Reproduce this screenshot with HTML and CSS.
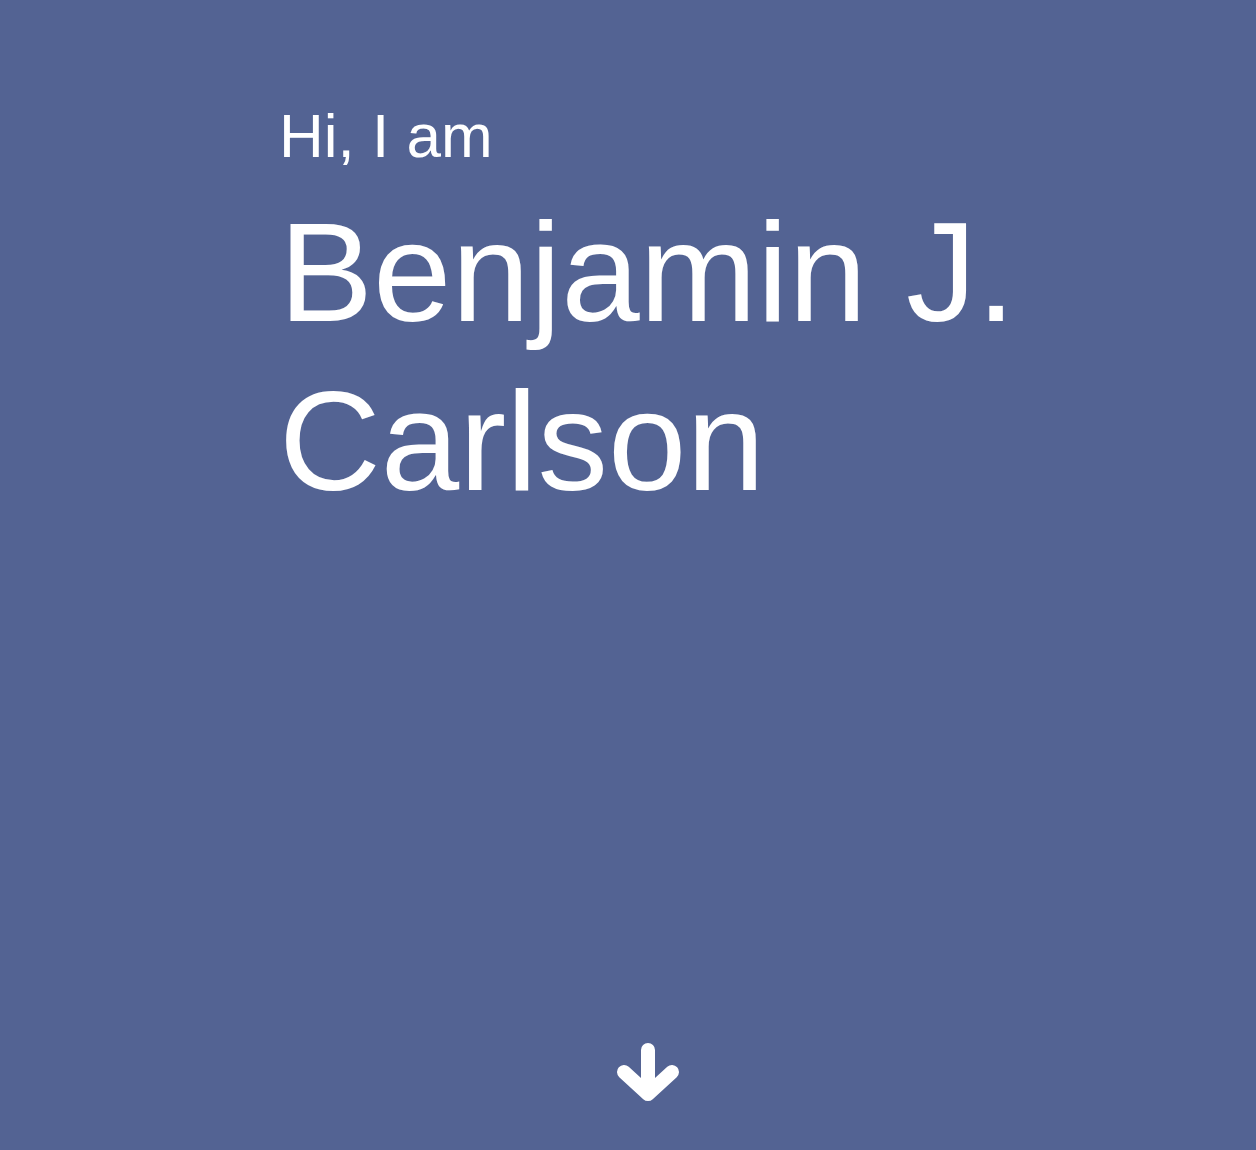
FILE: index.html
```html
<!DOCTYPE html>
<html lang="en">
<head>
<meta charset="utf-8">
<title>Benjamin J. Carlson</title>
<link rel="stylesheet" href="styles.css">
</head>
<body>
<section class="hero">
  <div class="intro">
    <p class="greeting">Hi, I am</p>
    <h1 class="name">Benjamin J.<br>Carlson</h1>
  </div>
  <a class="scroll" href="#about" aria-label="Scroll down">
    <svg width="64" height="64" viewBox="0 0 64 64" aria-hidden="true">
      <path d="M32 7 V50 M8 29 L32 51 L56 29" fill="none" stroke="#fff" stroke-width="14" stroke-linecap="round" stroke-linejoin="round"/>
    </svg>
  </a>
</section>
</body>
</html>
```

FILE: styles.css
```css
html, body {
  margin: 0;
  padding: 0;
}
body {
  background: #536393;
  font-family: "Liberation Sans", Arial, Helvetica, sans-serif;
  color: #fff;
}
.hero {
  height: 1150px;
  box-sizing: border-box;
  display: flex;
  flex-direction: column;
  padding: 99px 0 43px 279px;
}
.intro {
  display: flex;
  flex-direction: column;
}
.greeting {
  margin: 0;
  font-size: 62px;
  line-height: 74px;
}
.name {
  margin: 15px 0 0;
  font-weight: normal;
  font-size: 141px;
  line-height: 169px;
}
.scroll {
  margin-top: auto;
  align-self: flex-start;
  margin-left: 337px;
  display: block;
  width: 64px;
  height: 64px;
}
.scroll svg {
  display: block;
}
```
